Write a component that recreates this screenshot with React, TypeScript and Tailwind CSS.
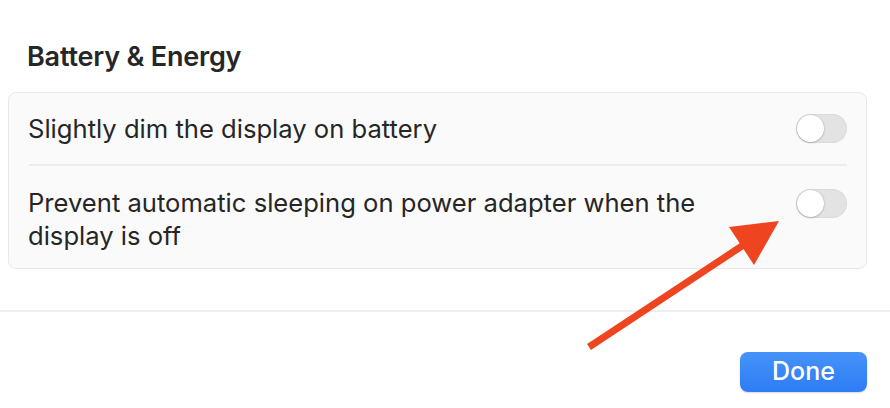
import type { ReactNode } from 'react';

function Toggle() {
  return (
    <div className="relative h-[29px] w-[51px] shrink-0 rounded-full bg-[#e3e3e3] shadow-[inset_0_0_0_1px_rgba(0,0,0,0.04)]">
      <div className="absolute left-[1px] top-[1px] h-[27px] w-[27px] rounded-full bg-white shadow-[0_0.5px_2px_rgba(0,0,0,0.35)]" />
    </div>
  );
}

function Row({ children, className }: { children: ReactNode; className?: string }) {
  return (
    <div className={`flex justify-between gap-6 pl-[19px] pr-[19px] ${className ?? ''}`}>
      {children}
    </div>
  );
}

export default function App() {
  return (
    <div
      className="relative h-[408px] w-[890px] overflow-hidden bg-white text-[#262626]"
      style={{ fontFamily: 'Inter, "Noto Sans", sans-serif' }}
    >
      <div className="pl-[27px] pt-[40px] text-[27px] font-semibold leading-[34px] tracking-[-0.2px]">
        Battery &amp; Energy
      </div>

      <div className="ml-[8px] mt-[18px] w-[859px] rounded-[8px] border border-[#e8e8e8] bg-[#fafafa]">
        <Row className="items-center py-[19px]">
          <span className="text-[25.6px] leading-[33px]">Slightly dim the display on battery</span>
          <Toggle />
        </Row>
        <div className="ml-[20px] mr-[19px] h-[2px] bg-[#ececec]" />
        <Row className="items-start pb-[16px] pt-[20px]">
          <span className="max-w-[700px] text-[25.6px] leading-[33px]">
            Prevent automatic sleeping on power adapter when the display is off
          </span>
          <div className="pt-[3px]">
            <Toggle />
          </div>
        </Row>
      </div>

      <div className="mt-[41px] h-[2px] bg-[#efefef]" />

      <div className="flex justify-end pr-[23px] pt-[40px]">
        <button className="flex h-[40px] w-[127px] items-center justify-center rounded-[8px] bg-gradient-to-b from-[#4593f8] to-[#2e7cf6] text-[25px] font-medium text-white shadow-[0_1px_2px_rgba(0,0,0,0.15)]">
          Done
        </button>
      </div>

      <svg className="pointer-events-none absolute left-0 top-0" width="890" height="408" viewBox="0 0 890 408">
        <line x1="589" y1="347" x2="745" y2="244" stroke="#ee4520" strokeWidth="7" />
        <polygon points="779,221 729,227 754,265" fill="#ee4520" />
      </svg>
    </div>
  );
}
